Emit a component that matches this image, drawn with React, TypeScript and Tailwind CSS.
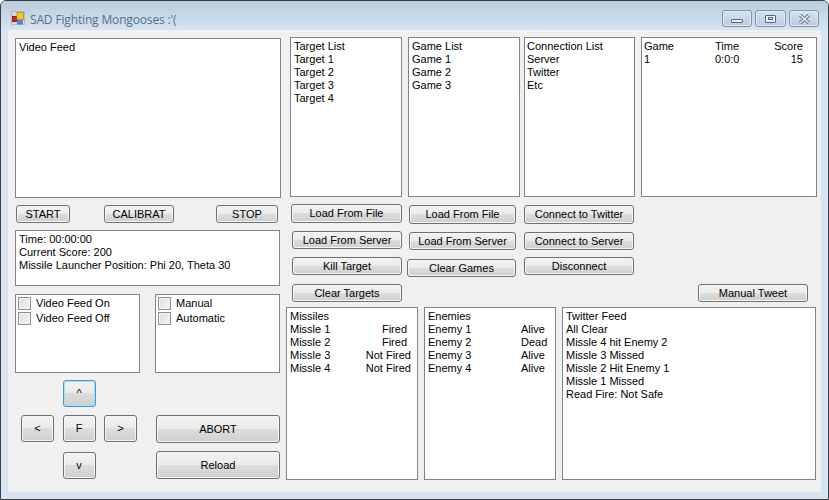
import React from 'react'

const font = "font-['Liberation_Sans',Arial,sans-serif]"

function Btn({ label, focused = false, className = '' }: { label: string; focused?: boolean; className?: string }) {
  const edge = focused
    ? 'border-[#3c9ad6] shadow-[inset_0_0_0_1px_#a6e0f7]'
    : 'border-[#707070] shadow-[inset_0_0_0_1px_#f6f6f6]'
  return (
    <button
      className={`flex items-center justify-center rounded-[3px] border bg-[linear-gradient(#f2f2f2_0%,#ebebeb_48%,#dddddd_50%,#cfcfcf_100%)] text-[11px] leading-none text-black ${edge} ${className}`}
    >
      {label}
    </button>
  )
}

function Box({ className = '', children }: { className?: string; children?: React.ReactNode }) {
  return (
    <div className={`border border-[#82828a] bg-white text-[11px] leading-[13px] text-black ${className}`}>
      {children}
    </div>
  )
}

function Lines({ items }: { items: string[] }) {
  return (
    <>
      {items.map((t) => (
        <div key={t}>{t}</div>
      ))}
    </>
  )
}

function Check({ label }: { label: string }) {
  return (
    <div className="flex h-[15px] items-center gap-[5px]">
      <div className="h-[13px] w-[13px] border border-[#8e8f8f] bg-[linear-gradient(135deg,#dcdcdc,#f6f6f6)] shadow-[inset_0_0_0_1px_#f4f4f4]" />
      <span>{label}</span>
    </div>
  )
}

function TitleButton({ w, children }: { w: string; children: React.ReactNode }) {
  return (
    <div className={`flex h-[17px] items-center justify-center rounded-[3px] border border-[#7f93a8] bg-[linear-gradient(#d5e1ee,#bccde0)] shadow-[inset_0_0_0_1px_#e3ecf5] ${w}`}>
      {children}
    </div>
  )
}

export default function App() {
  return (
    <div className={`${font} h-[500px] w-[829px] overflow-hidden rounded-t-[6px] border border-[#3c3f44] bg-[#d8e4f1]`}>
      {/* title bar */}
      <div className="flex h-[29px] items-start bg-[linear-gradient(#b9ccde,#d6e4f2)] pl-[10px] pr-[9px] pt-[9px]">
        <svg width="14" height="14" viewBox="0 0 14 14" className="mt-[1px]">
          <rect x="0.5" y="0.5" width="13" height="13" fill="#d4d8dc" stroke="#b4b8bc" />
          <rect x="1.5" y="5.5" width="4" height="5" fill="#c8281e" stroke="#7a1510" strokeWidth="0.8" />
          <rect x="6" y="1.5" width="6.5" height="7" fill="#f3c52e" stroke="#b98a14" strokeWidth="0.8" />
          <rect x="6.5" y="9.5" width="5" height="3.5" fill="#4f8ee0" stroke="#3d6aa8" strokeWidth="0.6" />
        </svg>
        <span className="ml-[5px] mt-[1px] font-['Open_Sans',sans-serif] text-[12px] leading-[18px] tracking-[-0.15px] text-[#5a7087]">SAD Fighting Mongooses :'(</span>
        <div className="ml-auto flex gap-[3px]">
          <TitleButton w="w-[30px]">
            <div className="mt-[5px] h-[4px] w-[12px] rounded-[1px] border border-[#55677c] bg-[#eef3f8]" />
          </TitleButton>
          <TitleButton w="w-[31px]">
            <div className="flex h-[8px] w-[11px] items-center justify-center rounded-[1px] border border-[#55677c] bg-[#eef3f8]">
              <div className="h-[3px] w-[5px] border border-[#55677c] bg-[#c9d6e4]" />
            </div>
          </TitleButton>
          <TitleButton w="w-[30px]">
            <svg width="13" height="10" viewBox="0 0 13 10">
              <path d="M2 1 L11 9 M11 1 L2 9" stroke="#55677c" strokeWidth="3.2" />
              <path d="M2 1 L11 9 M11 1 L2 9" stroke="#eef3f8" strokeWidth="1.6" />
            </svg>
          </TitleButton>
        </div>
      </div>

      {/* client area */}
      <div className="ml-[7px] flex h-[462px] w-[813px] bg-[#f0f0f0] pl-[7px] pt-[8px]">
        {/* left column */}
        <div className="flex w-[266px] flex-col">
          <Box className="h-[160px] w-[266px] pt-[2px] pl-[3px]">Video Feed</Box>
          <div className="mt-[7px] flex h-[18px] items-stretch">
            <Btn label="START" className="ml-[1px] w-[54px]" />
            <Btn label="CALIBRAT" className="ml-[34px] w-[70px]" />
            <Btn label="STOP" className="ml-[42px] w-[62px]" />
          </div>
          <Box className="mt-[7px] h-[56px] w-[265px] pt-[2px] pl-[3px]">
            <Lines items={['Time: 00:00:00', 'Current Score: 200', 'Missile Launcher Position: Phi 20, Theta 30']} />
          </Box>
          <div className="mt-[8px] flex gap-[15px]">
            <Box className="h-[79px] w-[125px] pl-[2px] pt-[1px]">
              <Check label="Video Feed On" />
              <Check label="Video Feed Off" />
            </Box>
            <Box className="h-[79px] w-[125px] pl-[2px] pt-[1px]">
              <Check label="Manual" />
              <Check label="Automatic" />
            </Box>
          </div>
          <div className="mt-[7px] flex">
            <div className="ml-[6px] grid w-[116px] grid-cols-[33px_33px_33px] gap-x-[8.5px]">
              <div />
              <Btn label="^" focused className="h-[27px] w-[33px]" />
              <div />
              <Btn label="<" className="mt-[8px] h-[27px] w-[33px]" />
              <Btn label="F" className="mt-[8px] h-[27px] w-[33px]" />
              <Btn label=">" className="mt-[8px] h-[27px] w-[33px]" />
              <div />
              <Btn label="v" className="mt-[9px] h-[27px] w-[33px]" />
              <div />
            </div>
            <div className="ml-[19px] mt-[35px] flex w-[124px] flex-col gap-[8px]">
              <Btn label="ABORT" className="h-[28px]" />
              <Btn label="Reload" className="h-[28px]" />
            </div>
          </div>
        </div>

        {/* right column */}
        <div className="ml-[5px] flex w-[531px] flex-col">
          <div className="ml-[4px] flex h-[160px] -mt-[1px]">
            <Box className="w-[112px] pt-[2px] pl-[3px]">
              <Lines items={['Target List', 'Target 1', 'Target 2', 'Target 3', 'Target 4']} />
            </Box>
            <Box className="ml-[6px] w-[112px] pt-[2px] pl-[3px]">
              <Lines items={['Game List', 'Game 1', 'Game 2', 'Game 3']} />
            </Box>
            <Box className="ml-[4px] w-[111px] pt-[2px] pl-[2px]">
              <Lines items={['Connection List', 'Server', 'Twitter', 'Etc']} />
            </Box>
            <Box className="ml-[6px] w-[176px] pt-[2px] pl-[2px] pr-[13px]">
              <div className="grid grid-cols-[71px_1fr_auto]">
                <span>Game</span>
                <span>Time</span>
                <span className="text-right">Score</span>
                <span>1</span>
                <span>0:0:0</span>
                <span className="text-right">15</span>
              </div>
            </Box>
          </div>

          <div className="mt-[7px] flex h-[98px]">
            <div className="ml-[5px] flex w-[111px] flex-col">
              <Btn label="Load From File" className="h-[19px]" />
              <Btn label="Load From Server" className="ml-[1px] mt-[8px] h-[18px]" />
              <Btn label="Kill Target" className="ml-[1px] mt-[8px] h-[18px]" />
              <Btn label="Clear Targets" className="ml-[1px] mt-[9px] h-[18px]" />
            </div>
            <div className="ml-[5px] flex w-[109px] flex-col pt-[1px]">
              <Btn label="Load From File" className="ml-[2px] h-[19px]" />
              <Btn label="Load From Server" className="ml-[2px] mt-[8px] h-[18px]" />
              <Btn label="Clear Games" className="mt-[9px] h-[18px]" />
            </div>
            <div className="ml-[8px] flex w-[110px] flex-col pt-[1px]">
              <Btn label="Connect to Twitter" className="h-[19px]" />
              <Btn label="Connect to Server" className="mt-[8px] h-[18px]" />
              <Btn label="Disconnect" className="mt-[7px] h-[18px]" />
            </div>
            <Btn label="Manual Tweet" className="ml-[64px] mt-[80px] h-[18px] w-[110px]" />
          </div>

          <div className="mt-[5px] flex gap-[6px]">
            <Box className="h-[173px] w-[132px] pt-[2px] pl-[3px] pr-[6px]">
              <div>Missiles</div>
              {[
                ['Missle 1', 'Fired', 'pr-[4px]'],
                ['Missle 2', 'Fired', 'pr-[4px]'],
                ['Missle 3', 'Not Fired', ''],
                ['Missle 4', 'Not Fired', ''],
              ].map(([a, b, pad]) => (
                <div key={a} className="flex justify-between">
                  <span>{a}</span>
                  <span className={pad}>{b}</span>
                </div>
              ))}
            </Box>
            <Box className="h-[173px] w-[132px] pt-[2px] pl-[3px]">
              <div>Enemies</div>
              {[
                ['Enemy 1', 'Alive'],
                ['Enemy 2', 'Dead'],
                ['Enemy 3', 'Alive'],
                ['Enemy 4', 'Alive'],
              ].map(([a, b]) => (
                <div key={a} className="grid grid-cols-[93px_auto]">
                  <span>{a}</span>
                  <span>{b}</span>
                </div>
              ))}
            </Box>
            <Box className="h-[173px] w-[254px] pt-[2px] pl-[3px]">
              <Lines
                items={[
                  'Twitter Feed',
                  'All Clear',
                  'Missle 4 hit Enemy 2',
                  'Missle 3 Missed',
                  'Missle 2 Hit Enemy 1',
                  'Missle 1 Missed',
                  'Read Fire: Not Safe',
                ]}
              />
            </Box>
          </div>
        </div>
      </div>
    </div>
  )
}
